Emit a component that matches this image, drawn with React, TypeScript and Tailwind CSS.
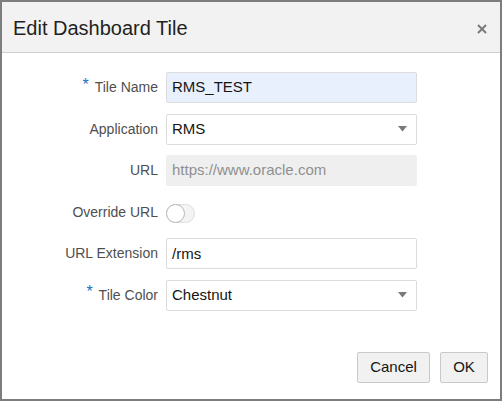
import React from 'react'

const font = { fontFamily: '"Liberation Sans", Arial, sans-serif' }

function Label({ text, required }: { text: string; required?: boolean }) {
  return (
    <div className="w-[154px] flex justify-end items-center pr-[8px] text-[14px] text-[#4f4f4f]">
      {required && <span className="text-[#1d6ec0] text-[16px] mr-[6px] -mt-[6px]">*</span>}
      <span>{text}</span>
    </div>
  )
}

function Arrow() {
  return (
    <svg width="9" height="6" viewBox="0 0 9 6" className="mr-[9px]">
      <polygon points="0,0 9,0 4.5,5.5" fill="#7a7a7a" />
    </svg>
  )
}

export default function App() {
  return (
    <div className="w-[502px] h-[401px] border-2 border-[#7d7d7d] bg-white flex flex-col" style={font}>
      {/* header */}
      <div className="h-[51px] shrink-0 bg-[#f2f2f2] border-b border-[#cfcfcf] flex items-center justify-between pl-[11px] pr-[13px]">
        <h1 className="text-[20px] text-[#1f1f1f] pt-[2px]">Edit Dashboard Tile</h1>
        <svg width="10" height="10" viewBox="0 0 10 10" className="mt-[4px]">
          <path d="M1 1 L9 9 M9 1 L1 9" stroke="#7a7a7a" strokeWidth="2" />
        </svg>
      </div>

      {/* form */}
      <div className="flex flex-col gap-[10.6px] pt-[19px] pl-[10px]">
        <div className="flex h-[31px]">
          <Label text="Tile Name" required />
          <div className="w-[251px] h-[31px] bg-[#e8f0fe] border border-[#dcdcdc] rounded-[2px] flex items-center px-[5px] text-[15px] text-[#161513]">
            RMS_TEST
          </div>
        </div>
        <div className="flex h-[31px]">
          <Label text="Application" />
          <div className="w-[251px] h-[31px] bg-white border border-[#dcdcdc] rounded-[2px] flex items-center justify-between pl-[5px] text-[15px] text-[#161513]">
            <span>RMS</span>
            <Arrow />
          </div>
        </div>
        <div className="flex h-[31px]">
          <Label text="URL" />
          <div className="w-[251px] h-[31px] bg-[#efefef] rounded-[2px] flex items-center px-[6px] text-[15px] text-[#8f8f8f]">
            https://www.oracle.com
          </div>
        </div>
        <div className="flex h-[31px]">
          <Label text="Override URL" />
          <div className="flex items-center">
            <div className="w-[29px] h-[19px] rounded-full bg-[#f4f4f4] border border-[#dedede] relative mt-[2px]">
              <div className="absolute -left-[1px] -top-[1px] w-[19px] h-[19px] rounded-full bg-white border border-[#b8b8b8]" />
            </div>
          </div>
        </div>
        <div className="flex h-[31px]">
          <Label text="URL Extension" />
          <div className="w-[251px] h-[31px] bg-white border border-[#dcdcdc] rounded-[2px] flex items-center px-[5px] text-[15px] text-[#161513]">
            /rms
          </div>
        </div>
        <div className="flex h-[31px]">
          <Label text="Tile Color" required />
          <div className="w-[251px] h-[31px] bg-white border border-[#dcdcdc] rounded-[2px] flex items-center justify-between pl-[5px] text-[15px] text-[#161513]">
            <span>Chestnut</span>
            <Arrow />
          </div>
        </div>
      </div>

      {/* footer */}
      <div className="flex justify-end gap-[10px] mt-auto pr-[12px] pb-[16px]">
        <button className="w-[73px] h-[31px] bg-[#f1f1f1] border border-[#c9c9c9] rounded-[2px] text-[15px] text-[#161513]">
          Cancel
        </button>
        <button className="w-[48px] h-[31px] bg-[#f1f1f1] border border-[#c9c9c9] rounded-[2px] text-[15px] text-[#161513]">
          OK
        </button>
      </div>
    </div>
  )
}
